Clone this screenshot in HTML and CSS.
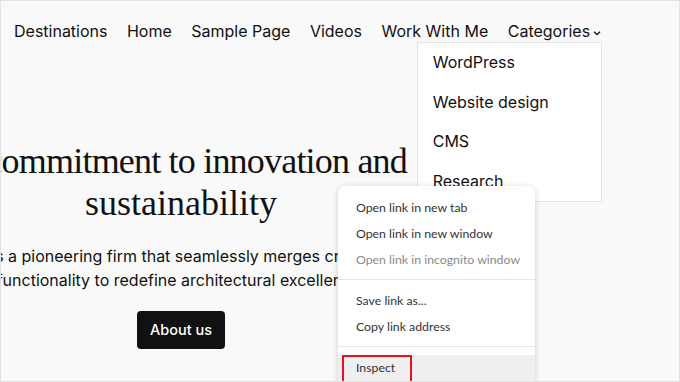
FILE: index.html
```html
<!DOCTYPE html>
<html lang="en">
<head>
  <meta charset="UTF-8">
  <title>Études</title>
  <link rel="stylesheet" href="styles.css">
</head>
<body>
  <div class="frame">
    <nav class="nav">
      <a href="#">Destinations</a>
      <a href="#">Home</a>
      <a href="#">Sample Page</a>
      <a href="#">Videos</a>
      <a href="#">Work With Me</a>
      <div class="nav-parent">
        <a href="#">Categories</a>
        <svg class="chevron" width="10" height="10" viewBox="0 0 10 10"><path d="M2 3.8 L5 6.6 L8 3.8" fill="none" stroke="#1a1a1a" stroke-width="1.4"/></svg>
        <ul class="submenu">
          <li><a href="#">WordPress</a></li>
          <li><a href="#">Website design</a></li>
          <li><a href="#">CMS</a></li>
          <li><a href="#">Research</a></li>
        </ul>
      </div>
    </nav>

    <section class="hero">
      <h1>
        <span class="wide">A commitment to innovation and</span>
        <span>sustainability</span>
      </h1>
      <p>
        <span>Études is a pioneering firm that seamlessly merges creativity and</span>
        <span>functionality to redefine architectural excellence.</span>
      </p>
      <a class="btn" href="#">About us</a>
    </section>

    <div class="context-menu">
      <div class="item">Open link in new tab</div>
      <div class="item">Open link in new window</div>
      <div class="item disabled">Open link in incognito window</div>
      <div class="sep"></div>
      <div class="item">Save link as...</div>
      <div class="item">Copy link address</div>
      <div class="sep"></div>
      <div class="item active">Inspect<span class="mark"></span></div>
    </div>
  </div>
</body>
</html>
```

FILE: styles.css
```css
html, body {
  margin: 0;
  padding: 0;
}

body {
  font-family: Inter, "Noto Sans", sans-serif;
  color: #111;
  overflow: hidden;
}

.frame {
  position: relative;
  width: 680px;
  height: 382px;
  box-sizing: border-box;
  border: 1px solid #e2e2e2;
  background-color: #f9f9f9;
  overflow: hidden;
}

a {
  color: inherit;
  text-decoration: none;
}

.nav {
  display: flex;
  align-items: center;
  gap: 19.5px;
  padding: 18px 0 0 13px;
  font-size: 16px;
  line-height: 24px;
}

.nav-parent {
  position: relative;
  display: flex;
  align-items: center;
  gap: 2px;
}

.chevron {
  margin-top: 3px;
}

.submenu {
  position: absolute;
  top: 23px;
  left: -91px;
  width: 183px;
  margin: 0;
  padding: 0;
  list-style: none;
  background: #fff;
  border: 1px solid #e4e4e4;
  z-index: 2;
}

.submenu li {
  padding: 8px 15px;
  line-height: 23.5px;
}

.submenu li:last-child {
  padding-bottom: 8px;
}

.hero {
  width: 360px;
  margin-top: 97px;
  display: flex;
  flex-direction: column;
  align-items: center;
}

.hero h1 {
  margin: 0;
  display: flex;
  flex-direction: column;
  align-items: center;
  font-family: "Liberation Serif", serif;
  font-weight: normal;
  font-size: 36px;
  line-height: 42px;
  white-space: nowrap;
}

.hero h1 .wide {
  letter-spacing: -0.8px;
}

.hero p {
  margin: 20px 0 0;
  display: flex;
  flex-direction: column;
  align-items: center;
  font-size: 16px;
  line-height: 24px;
  white-space: nowrap;
}

.btn {
  margin-top: 19px;
  padding: 9px 13px;
  background: #111;
  color: #fff;
  border-radius: 4px;
  font-size: 14.5px;
  line-height: 20px;
  font-weight: 500;
}

.context-menu {
  position: absolute;
  left: 337px;
  top: 185px;
  width: 197px;
  padding-top: 9px;
  height: 220px;
  background: #fff;
  border-radius: 8px;
  box-shadow: 0 1px 6px rgba(0, 0, 0, 0.18);
  font-family: Lato, "Noto Sans", sans-serif;
  font-size: 12.3px;
  color: #333;
  z-index: 3;
}

.item {
  position: relative;
  height: 26px;
  line-height: 26px;
  padding-left: 18px;
}

.item.disabled {
  color: #8a8a8a;
}

.item.active {
  background: #efefef;
}

.sep {
  height: 1px;
  margin: 6px 0 8px;
  background: #e6e6e6;
}

.mark {
  position: absolute;
  left: 4px;
  top: 0;
  width: 66px;
  height: 40px;
  border: 2px solid #e0141c;
}
```
